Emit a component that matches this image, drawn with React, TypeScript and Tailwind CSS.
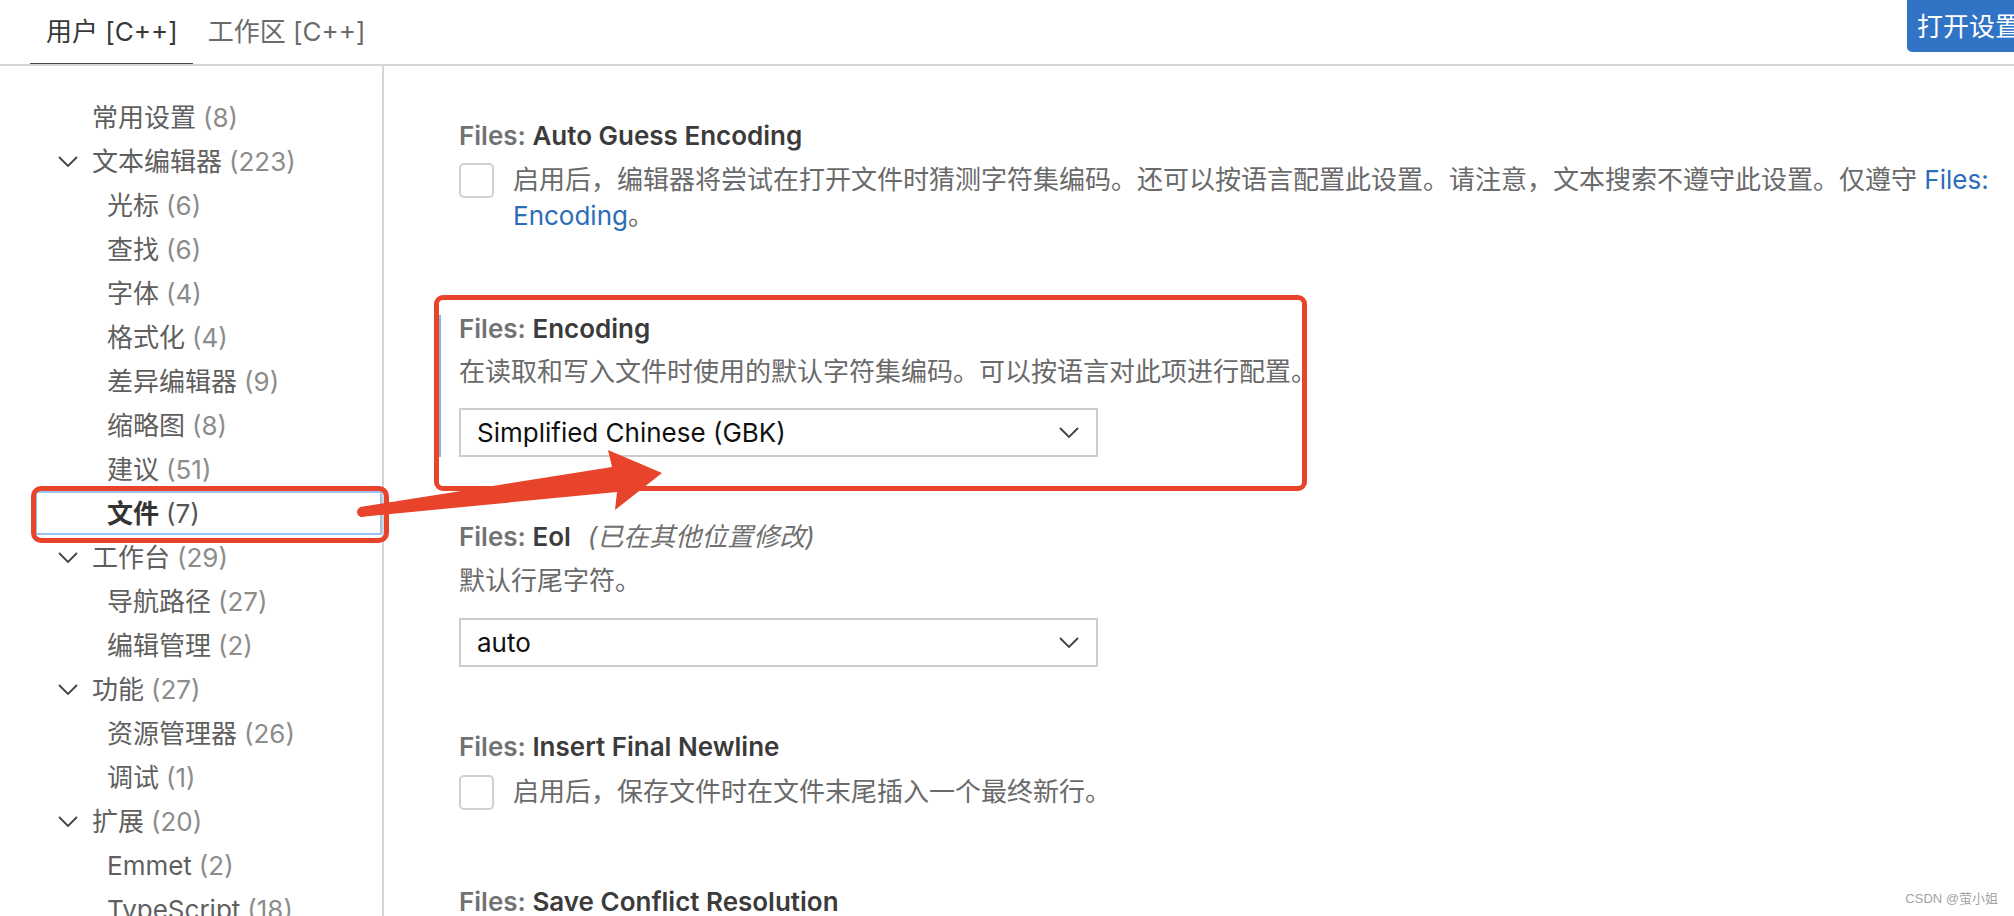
import React from "react";

type TocItem = {
  label: string;
  count: number;
  level: 1 | 2;
  chevron?: boolean;
  selected?: boolean;
};

const toc: TocItem[] = [
  { label: "常用设置", count: 8, level: 1 },
  { label: "文本编辑器", count: 223, level: 1, chevron: true },
  { label: "光标", count: 6, level: 2 },
  { label: "查找", count: 6, level: 2 },
  { label: "字体", count: 4, level: 2 },
  { label: "格式化", count: 4, level: 2 },
  { label: "差异编辑器", count: 9, level: 2 },
  { label: "缩略图", count: 8, level: 2 },
  { label: "建议", count: 51, level: 2 },
  { label: "文件", count: 7, level: 2, selected: true },
  { label: "工作台", count: 29, level: 1, chevron: true },
  { label: "导航路径", count: 27, level: 2 },
  { label: "编辑管理", count: 2, level: 2 },
  { label: "功能", count: 27, level: 1, chevron: true },
  { label: "资源管理器", count: 26, level: 2 },
  { label: "调试", count: 1, level: 2 },
  { label: "扩展", count: 20, level: 1, chevron: true },
  { label: "Emmet", count: 2, level: 2 },
  { label: "TypeScript", count: 18, level: 2 },
];

function Chevron({ className }: { className?: string }) {
  return (
    <svg viewBox="0 0 20 11" className={className} fill="none">
      <polyline points="1,1 10,10 19,1" stroke="#424242" strokeWidth="1.8" strokeLinejoin="miter" />
    </svg>
  );
}

function TocRow({ item }: { item: TocItem }) {
  let pad = "pl-[107px]";
  if (item.chevron) pad = "pl-[58px]";
  else if (item.level === 1) pad = "pl-[92px]";
  if (item.selected) pad = "ml-[35px] pl-[72px] outline-2 -outline-offset-2 outline-[#99c4f2]";
  return (
    <div className={`flex h-[44px] items-center whitespace-nowrap ${pad}`}>
      {item.chevron && <Chevron className="mr-[14px] h-[11px] w-[20px]" />}
      <span className={item.selected ? "font-bold text-[#333333]" : "text-[#5f5f5f]"}>{item.label}</span>
      <span className={`ml-[7px] ${item.selected ? "text-[#555555]" : "text-[#8c8c8c]"}`}>({item.count})</span>
    </div>
  );
}

function Title({ name, note }: { name: string; note?: string }) {
  return (
    <div className="h-[28px] whitespace-nowrap leading-[28px] font-semibold">
      <span className="text-[#727272]">Files: </span>
      <span className="text-[#3b3b3b]">{name}</span>
      {note && <span className="ml-[17px] font-normal italic text-[#6f6f6f]">{note}</span>}
    </div>
  );
}

function Checkbox() {
  return <div className="mt-[1px] h-[35px] w-[35px] shrink-0 rounded-[5px] border-2 border-[#d0d0d0] bg-white" />;
}

function Select({ value }: { value: string }) {
  return (
    <div className="flex h-[49px] w-[639px] items-center justify-between border-2 border-[#cdcdcd] pl-[16px] pr-[17px] text-[#111111]">
      <span>{value}</span>
      <Chevron className="h-[11px] w-[20px]" />
    </div>
  );
}

export default function App() {
  return (
    <div
      className="relative h-[916px] w-full overflow-hidden bg-white text-[26px]"
      style={{ fontFamily: 'Inter, "Noto Sans CJK SC", sans-serif' }}
    >
      {/* tabs */}
      <div className="flex h-[66px] items-stretch overflow-hidden border-b-2 border-[#d6d6d6]">
        <div className="ml-[30px] -mb-[2px] flex items-center border-b-[3px] border-[#444444] pl-[16px] pr-[15px] text-[#383838]">
          用户 [C++]
        </div>
        <div className="flex items-center pl-[15px] pb-[2px] text-[#6b6b6b]">工作区 [C++]</div>
        <div className="flex-1" />
        <div className="-mr-[30px] mb-[12px] flex shrink-0 items-center rounded-b-[5px] bg-[#3174c6] pl-[10px] pr-[23px] text-white">
          打开设置
        </div>
      </div>

      <div className="flex">
        {/* table of contents */}
        <div className="h-[850px] w-[384px] shrink-0 border-r-2 border-[#d6d6d6] pt-[29px]">
          {toc.map((item) => (
            <TocRow key={item.label} item={item} />
          ))}
        </div>

        {/* settings list */}
        <div className="flex-1 pr-[12px] pt-[56px] leading-[36px]">
          <div className="pl-[75px]">
            <Title name="Auto Guess Encoding" />
            <div className="mt-[12px] flex items-start gap-[19px] text-[#6a6a6a]">
              <Checkbox />
              <p>
                启用后，编辑器将尝试在打开文件时猜测字符集编码。还可以按语言配置此设置。请注意，文本搜索不遵守此设置。仅遵守{" "}
                <span className="text-[#2c6db8]">Files: Encoding</span>。
              </p>
            </div>
          </div>

          <div className="ml-[54px] mt-[81px] border-l-[3px] border-[#8ab6e2] pl-[18px]">
            <Title name="Encoding" />
            <p className="mt-[11px] text-[#6a6a6a]">在读取和写入文件时使用的默认字符集编码。可以按语言对此项进行配置。</p>
            <div className="mt-[18px]">
              <Select value="Simplified Chinese (GBK)" />
            </div>
          </div>

          <div className="mt-[66px] pl-[75px]">
            <Title name="Eol" note="(已在其他位置修改)" />
            <p className="mt-[12px] text-[#6a6a6a]">默认行尾字符。</p>
            <div className="mt-[19px]">
              <Select value="auto" />
            </div>
          </div>

          <div className="mt-[66px] pl-[75px]">
            <Title name="Insert Final Newline" />
            <div className="mt-[13px] flex items-start gap-[19px] text-[#6a6a6a]">
              <Checkbox />
              <p>启用后，保存文件时在文件末尾插入一个最终新行。</p>
            </div>
          </div>

          <div className="mt-[78px] pl-[75px]">
            <Title name="Save Conflict Resolution" />
          </div>
        </div>
      </div>

      {/* annotations */}
      <div className="absolute left-[434px] top-[295px] h-[196px] w-[873px] rounded-[9px] border-[5px] border-[#e8432b]" />
      <div className="absolute left-[31px] top-[486px] h-[57px] w-[358px] rounded-[10px] border-[5px] border-[#e8432b]" />
      <svg className="absolute left-0 top-0" width="700" height="560" viewBox="0 0 700 560">
        <circle cx="362" cy="512" r="5" fill="#e8432b" />
        <polygon points="360,507 612,467 608,450 662,473 615,510 617,492 360,517" fill="#e8432b" />
      </svg>

      <div
        className="absolute bottom-[8px] right-[16px] text-[13px] text-[#a3a3a3]"
        style={{ fontFamily: 'Arial, "Noto Sans CJK SC", sans-serif' }}
      >
        CSDN @萤小姐
      </div>
    </div>
  );
}
